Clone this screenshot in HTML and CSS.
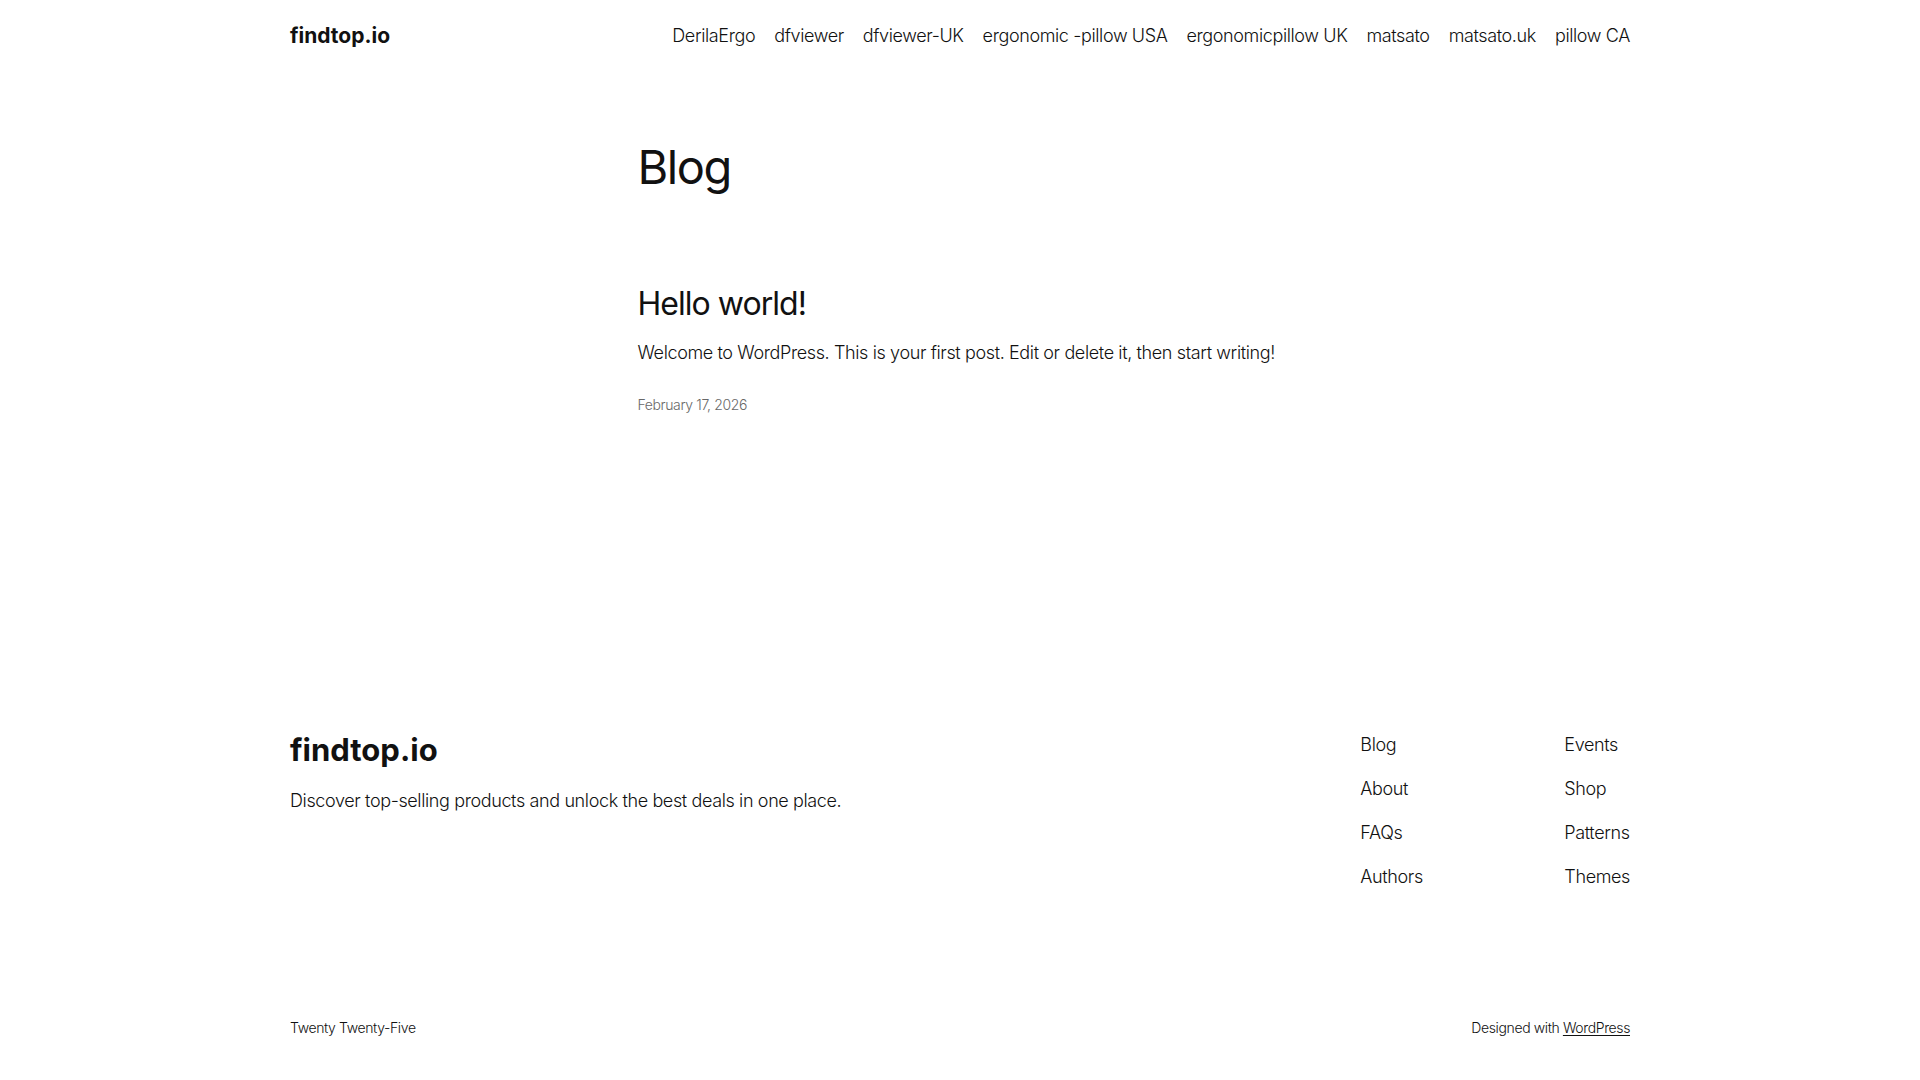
FILE: index.html
```html
<!DOCTYPE html>
<html lang="en">
<head>
<meta charset="utf-8">
<title>Blog – findtop.io</title>
<link rel="stylesheet" href="styles.css">
</head>
<body>
<header class="site-header">
  <div class="wide header-row">
    <a class="site-title" href="#">findtop.io</a>
    <nav class="main-nav">
      <a href="#">DerilaErgo</a>
      <a href="#">dfviewer</a>
      <a href="#">dfviewer-UK</a>
      <a href="#">ergonomic -pillow USA</a>
      <a href="#">ergonomicpillow UK</a>
      <a href="#">matsato</a>
      <a href="#">matsato.uk</a>
      <a href="#">pillow CA</a>
    </nav>
  </div>
</header>

<main class="site-main">
  <div class="content">
    <h1 class="page-title">Blog</h1>
    <article class="post">
      <h2 class="post-title"><a href="#">Hello world!</a></h2>
      <p class="post-excerpt">Welcome to WordPress. This is your first post. Edit or delete it, then start writing!</p>
      <time class="post-date">February 17, 2026</time>
    </article>
  </div>
</main>

<footer class="site-footer">
  <div class="wide footer-top">
    <div class="footer-brand">
      <a class="footer-title" href="#">findtop.io</a>
      <p class="tagline">Discover top-selling products and unlock the best deals in one place.</p>
    </div>
    <div class="footer-nav">
      <nav class="footer-col first">
        <a href="#">Blog</a>
        <a href="#">About</a>
        <a href="#">FAQs</a>
        <a href="#">Authors</a>
      </nav>
      <nav class="footer-col">
        <a href="#">Events</a>
        <a href="#">Shop</a>
        <a href="#">Patterns</a>
        <a href="#">Themes</a>
      </nav>
    </div>
  </div>
  <div class="wide footer-bottom">
    <span>Twenty Twenty-Five</span>
    <span>Designed with <a class="wp-link" href="#">WordPress</a></span>
  </div>
</footer>
</body>
</html>
```

FILE: styles.css
```css
* {
  box-sizing: border-box;
}

html, body {
  margin: 0;
  padding: 0;
  background: #ffffff;
}

body {
  font-family: Inter, "Noto Sans", "Liberation Sans", sans-serif;
  font-weight: 300;
  font-size: 18px;
  line-height: 1.5;
  color: #111111;
  letter-spacing: -0.021em;
}

a {
  color: inherit;
  text-decoration: none;
}

.wide {
  width: 1340px;
  margin: 0 auto;
}

/* Header */
.header-row {
  height: 70px;
  padding-top: 1px;
  display: flex;
  align-items: center;
  justify-content: space-between;
}

.site-title {
  font-size: 21px;
  font-weight: 700;
  letter-spacing: 0;
  line-height: 1.3;
}

.main-nav {
  display: flex;
  gap: 19px;
  font-size: 18px;
  line-height: 1.5;
}

/* Main */
.site-main {
  padding-top: 69px;
  height: 661px;
}

.content {
  width: 645px;
  margin: 0 auto;
}

.page-title {
  margin: 0;
  font-size: 47px;
  font-weight: 400;
  line-height: 1.2;
  letter-spacing: -0.03em;
}

.post {
  margin-top: 90px;
}

.post-title {
  margin: 0;
  font-size: 32px;
  font-weight: 400;
  line-height: 1.2;
  letter-spacing: -0.03em;
}

.post-excerpt {
  margin: 15px 0 0;
  font-size: 18px;
  line-height: 1.5;
}

.post-date {
  display: block;
  margin-top: 28px;
  font-size: 14px;
  line-height: 1.5;
  color: #686868;
}

/* Footer */
.footer-top {
  display: flex;
  justify-content: space-between;
  align-items: flex-start;
}

.footer-title {
  display: block;
  font-size: 31px;
  font-weight: 700;
  line-height: 1.2;
  letter-spacing: 0;
}

.tagline {
  margin: 19px 0 0;
  font-size: 18px;
  line-height: 1.5;
}

.footer-nav {
  display: flex;
}

.footer-col {
  display: flex;
  flex-direction: column;
  gap: 17px;
  font-size: 18px;
  line-height: 1.5;
}

.footer-col.first {
  width: 204px;
}

.footer-bottom {
  margin-top: 127px;
  display: flex;
  justify-content: space-between;
  font-size: 14px;
  line-height: 1.5;
}

.wp-link {
  text-decoration: underline;
  text-underline-offset: 2px;
}
```
